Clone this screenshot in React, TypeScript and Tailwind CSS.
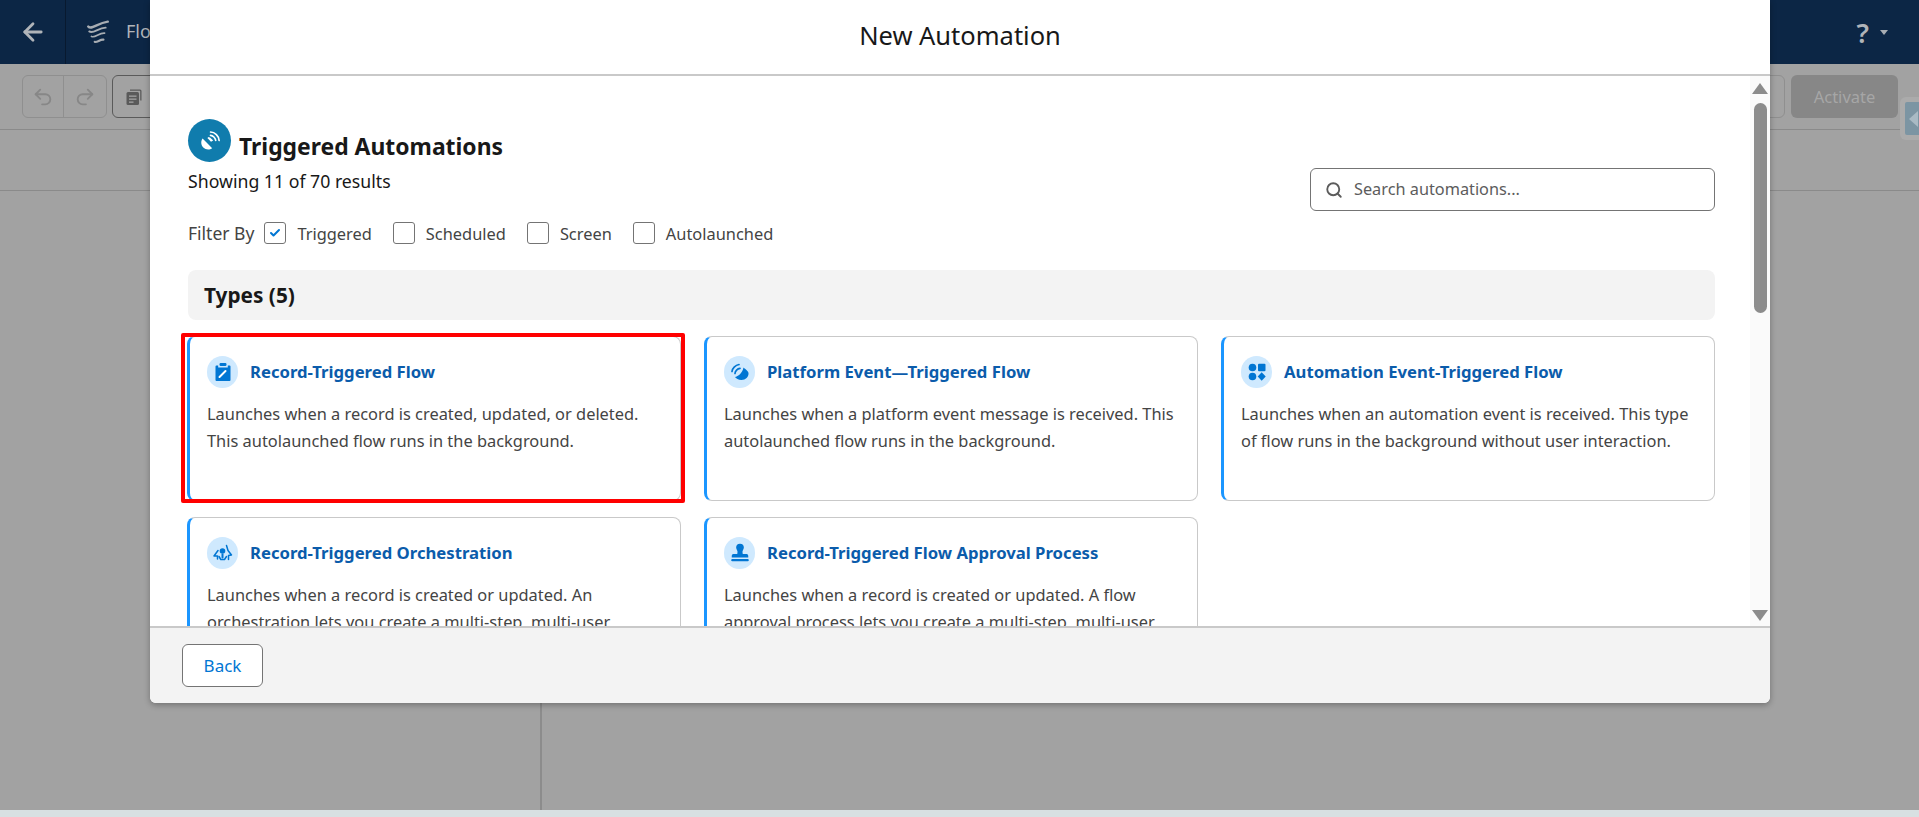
import React from "react";
import { ArrowLeft, Undo2, Redo2, Search, Check } from "lucide-react";

const Dish = ({ className = "" }: { className?: string }) => (
  <svg viewBox="0 0 24 24" className={className} fill="currentColor">
    <path d="M4.6 9.6 14.2 19.2C11.6 21.2 7.7 21 5.3 18.6 2.9 16.2 2.6 12.2 4.6 9.6Z" />
    <path d="M9.4 9.1 13 12.7 15.2 11.6 12.3 8.700 10.600 8Z" />
    <path d="M12.5 6.3C14.8 6.4 17.5 9 17.7 11.4" fill="none" stroke="currentColor" strokeWidth="1.7" strokeLinecap="round" />
    <path d="M12.6 3C16.8 3 21 7.2 21.1 11.4" fill="none" stroke="currentColor" strokeWidth="1.7" strokeLinecap="round" />
  </svg>
);

const Clipboard = () => (
  <svg viewBox="0 0 20 20" className="w-[20px] h-[20px]" fill="#0176d3">
    <rect x="6.500" y="1" width="7" height="3" rx="1.200" />
    <path d="M3.500 3.500H5.200V5.500h9.600V3.500h1.700a1 1 0 0 1 1 1v13.500a1 1 0 0 1-1 1h-13a1 1 0 0 1-1-1V4.500a1 1 0 0 1 1-1Z" />
    <path d="M6.500 15 12.500 9" stroke="#fff" strokeWidth="2" strokeLinecap="round" />
  </svg>
);

const PlatformIcon = () => (
  <svg viewBox="0 0 20 20" className="w-[20px] h-[20px]" fill="#0176d3">
    <path d="M13.500 5.500C14.500 6.500 18 8.500 18.500 11 18.800 15 15.500 18 11.500 18 8.500 18 5.800 16.500 5 15 8 14.500 12.500 11 13.500 5.500Z" />
    <path d="M2 9.500C2 6.500 5.500 3 9 2.500" fill="none" stroke="#0176d3" strokeWidth="1.700" strokeLinecap="round" />
    <path d="M5 11.500C5 9 7.500 6.500 10 6.300" fill="none" stroke="#0176d3" strokeWidth="1.700" strokeLinecap="round" />
  </svg>
);

const ShapesIcon = () => (
  <svg viewBox="0 0 20 20" className="w-[20px] h-[20px]" fill="#0176d3">
    <circle cx="5.500" cy="5.500" r="3.800" />
    <rect x="11" y="1.700" width="7.500" height="7.500" rx="1" />
    <circle cx="5.500" cy="14.500" r="3.800" />
    <path d="M14.700 10.200 18.700 14.500 14.700 18.800 10.700 14.500Z" />
  </svg>
);

const OrchestrationIcon = () => (
  <svg viewBox="0 0 20 20" className="w-[20px] h-[20px]" fill="none" stroke="#0176d3" strokeWidth="1.500" strokeLinecap="round" strokeLinejoin="round">
    <circle cx="9.500" cy="8" r="2.800" fill="#0176d3" stroke="none" />
    <path d="M9.500 11.500V14.500" strokeWidth="2" />
    <path d="M5 7.500 1 13h3.500v3" />
    <path d="M6 13.500 7.800 16.500H11.500L13.500 13.500" />
    <path d="M13.500 2.500 15 7.500 18.500 12 15.500 12.500 15.500 16.500" />
  </svg>
);

const StampIcon = () => (
  <svg viewBox="0 0 20 20" className="w-[22px] h-[22px]" fill="#0176d3">
    <path d="M10 1.500a3.500 3.500 0 0 1 3.500 3.500c0 1.500-1 2.300-1.200 3.500-.1.800 0 1.500.2 2.500h3.500a1.500 1.500 0 0 1 1.500 1.500V14H2.500v-1.500A1.500 1.500 0 0 1 4 11h3.500c.2-1 .3-1.700.2-2.500C7.500 7.300 6.500 6.500 6.500 5A3.500 3.500 0 0 1 10 1.500Z" />
    <rect x="2" y="15.500" width="16" height="2" rx="1" />
  </svg>
);

const FlowLogo = () => (
  <svg viewBox="0 0 22 22" className="w-[24px] h-[24px]" fill="none" stroke="#a8adb3" strokeLinecap="round">
    <path d="M2 6C5 9.500 10 3 20 1.500" strokeWidth="2.200" />
    <path d="M3 10.500C7 13 11 7 18 7" strokeWidth="1.800" />
    <path d="M5 15C8 17 12 11.500 17 12" strokeWidth="1.600" />
    <path d="M8 20C10 21 13 17.500 16 18" strokeWidth="2" />
  </svg>
);

const CopyIcon = () => (
  <svg viewBox="0 0 18 18" className="w-[18px] h-[18px]" fill="#5a5a5a">
    <path d="M5 1.500h10a1.500 1.500 0 0 1 1.500 1.500v9.500h-1.300V3a.3.300 0 0 0-.3-.300H5Z" />
    <rect x="1.500" y="4" width="12.500" height="13" rx="1.500" />
    <rect x="4" y="7.500" width="7.500" height="1.300" fill="#a2a2a2" />
    <rect x="4" y="10.500" width="7.500" height="1.300" fill="#a2a2a2" />
    <rect x="4" y="13.500" width="4.500" height="1.300" fill="#a2a2a2" />
  </svg>
);

function Card({ icon, title, desc }: { icon: React.ReactNode; title: string; desc: React.ReactNode }) {
  return (
    <div className="h-[165px] rounded-[8px] border border-[#c9c9c9] border-l-[3px] border-l-[#1b96ff] pl-[17px] pr-[13px] pt-[19px]">
      <div className="flex items-center gap-[12px] h-[32px]">
        <span className="w-[31px] h-[32px] rounded-full bg-[#cfe9fe] flex items-center justify-center shrink-0">{icon}</span>
        <span className="text-[16.7px] font-bold text-[#0b5cab] leading-[32px] whitespace-nowrap">{title}</span>
      </div>
      <p className="mt-[12px] text-[16.4px] leading-[27px] text-[#444444]">{desc}</p>
    </div>
  );
}

function Filter({ label, checked }: { label: string; checked?: boolean }) {
  return (
    <div className="flex items-center gap-[11px]">
      <span className="w-[22px] h-[22px] rounded-[3px] border border-[#747474] bg-white flex items-center justify-center">
        {checked && <Check className="w-[12px] h-[12px] text-[#0176d3]" strokeWidth={4} />}
      </span>
      <span className="text-[16.4px] text-[#444444] leading-[22px] pt-[2px]">{label}</span>
    </div>
  );
}

export default function App() {
  return (
    <div className="relative h-[817px] w-[1919px] overflow-hidden bg-[#a2a2a2] font-['Noto_Sans','Open_Sans',sans-serif]">
      {/* Backdrop page */}
      <div className="flex flex-col h-full">
        <div className="h-[64px] bg-[#0c2645] flex items-center text-[#b0b4b9] shrink-0">
          <div className="w-[66px] h-full flex items-center justify-center border-r border-[#08192f]">
            <ArrowLeft className="w-[28px] h-[28px]" strokeWidth={2.4} />
          </div>
          <div className="ml-[20px]"><FlowLogo /></div>
          <span className="ml-[16px] text-[18px] pb-[2px]">Flow</span>
          <span className="ml-auto text-[27px] font-semibold leading-none">?</span>
          <span className="ml-[11px] mr-[31px] w-0 h-0 border-x-[4px] border-x-transparent border-t-[5px] border-t-[#a8adb3]"></span>
        </div>
        <div className="h-[66px] border-b border-[#8a8a8a] flex items-center pl-[22px] pr-[21px] shrink-0">
          <div className="flex h-[43px] w-[85px] rounded-[6px] border border-[#8f8f8f] text-[#878787]">
            <span className="w-[41px] flex items-center justify-center border-r border-[#8f8f8f]"><Undo2 className="w-[22px] h-[22px]" /></span>
            <span className="flex-1 flex items-center justify-center"><Redo2 className="w-[22px] h-[22px]" /></span>
          </div>
          <div className="ml-[5px] h-[43px] w-[60px] rounded-[6px] border border-[#5a5a5a] flex items-center pl-[12px]"><CopyIcon /></div>
          <div className="ml-auto h-[43px] w-[60px] rounded-[6px] border border-[#8f8f8f]"></div>
          <div className="ml-[6px] h-[43px] w-[107px] rounded-[6px] bg-[#878787] text-[#a6a6a6] text-[16.5px] pt-[1px] flex items-center justify-center">Activate</div>
        </div>
        <div className="h-[61px] border-b border-[#8a8a8a] shrink-0"></div>
        <div className="flex-1 flex">
          <div className="w-[542px] border-r-2 border-[#8c8c8c]"></div>
        </div>
        <div className="h-[7px] bg-[#d8e0e2] shrink-0"></div>
      </div>

      <div className="absolute right-0 top-[97px] w-[19px] h-[43px] rounded-l-[6px] bg-[#ababab] pl-[5px] py-[5px]">
        <div className="w-full h-full bg-[#7c95a3] rounded-l-[2px] flex items-center">
          <span className="w-0 h-0 border-y-[8px] border-y-transparent border-r-[9px] border-r-[#a9bac4] ml-[4px]"></span>
        </div>
      </div>

      {/* Modal */}
      <div className="absolute left-[150px] top-0 w-[1620px] h-[703px] bg-white rounded-b-[6px] shadow-[0_2px_6px_rgba(0,0,0,0.3)] flex flex-col overflow-hidden">
        <div className="h-[76px] shrink-0 border-b-2 border-[#c9c9c9] flex items-center justify-center pb-[4px]">
          <h1 className="text-[25.5px] text-[#181818] font-normal">New Automation</h1>
        </div>

        <div className="flex-1 flex min-h-0">
          <div className="flex-1 min-w-0 overflow-hidden pl-[38px] pr-[35px]">
            <div className="flex justify-between">
              <div>
                <div className="flex items-end gap-[8px] pt-[43px]">
                  <span className="w-[43px] h-[43px] rounded-full bg-[#107cad] text-white flex items-center justify-center">
                    <Dish className="w-[24px] h-[24px]" />
                  </span>
                  <h2 className="text-[22.9px] font-bold text-[#181818] leading-[30px]">Triggered Automations</h2>
                </div>
                <p className="mt-[8px] text-[17.7px] leading-[22px] text-[#181818]">Showing 11 of 70 results</p>
                <div className="mt-[30px] flex items-center h-[22px]">
                  <span className="text-[17.5px] text-[#444444] mr-[10px]">Filter By</span>
                  <Filter label="Triggered" checked />
                  <div className="w-[21px]" />
                  <Filter label="Scheduled" />
                  <div className="w-[21px]" />
                  <Filter label="Screen" />
                  <div className="w-[21px]" />
                  <Filter label="Autolaunched" />
                </div>
              </div>
              <div className="mt-[92px] w-[405px] h-[43px] rounded-[6px] border border-[#747474] flex items-center pl-[14px] gap-[11px]">
                <Search className="w-[18px] h-[18px] text-[#5c5c5c]" strokeWidth={2.5} />
                <span className="text-[16.3px] text-[#5c5c5c]">Search automations...</span>
              </div>
            </div>

            <div className="mt-[26px] h-[50px] rounded-[8px] bg-[#f3f3f3] flex items-center pl-[16px] pt-[1px]">
              <span className="text-[20.8px] font-bold text-[#181818]">Types (5)</span>
            </div>

            <div className="mt-[16px] ml-[-1px] grid grid-cols-3 gap-x-[23px] gap-y-[16px]">
              <Card icon={<Clipboard />} title="Record-Triggered Flow" desc="Launches when a record is created, updated, or deleted. This autolaunched flow runs in the background." />
              <Card icon={<PlatformIcon />} title="Platform Event—Triggered Flow" desc="Launches when a platform event message is received. This autolaunched flow runs in the background." />
              <Card icon={<ShapesIcon />} title="Automation Event-Triggered Flow" desc="Launches when an automation event is received. This type of flow runs in the background without user interaction." />
              <Card icon={<OrchestrationIcon />} title="Record-Triggered Orchestration" desc="Launches when a record is created or updated. An orchestration lets you create a multi-step, multi-user process." />
              <Card icon={<StampIcon />} title="Record-Triggered Flow Approval Process" desc="Launches when a record is created or updated. A flow approval process lets you create a multi-step, multi-user process." />
            </div>
          </div>

          <div className="w-[20px] shrink-0 bg-[#fafafa] flex flex-col items-center pt-[7px]">
            <span className="w-0 h-0 border-x-[8px] border-x-transparent border-b-[11px] border-b-[#8c8c8c]"></span>
            <span className="mt-[9px] w-[13px] h-[210px] rounded-full bg-[#8c8c8c]"></span>
            <span className="mt-auto mb-[5px] w-0 h-0 border-x-[8px] border-x-transparent border-t-[11px] border-t-[#8c8c8c]"></span>
          </div>
        </div>

        <div className="h-[77px] shrink-0 border-t-2 border-[#c9c9c9] bg-[#f3f3f3] flex items-center pl-[32px]">
          <button className="w-[81px] h-[43px] rounded-[6px] border border-[#747474] bg-white text-[17px] text-[#0176d3]">Back</button>
        </div>
      </div>

      {/* Red annotation */}
      <div className="absolute left-[181px] top-[333px] w-[504px] h-[170px] border-[4px] border-[#ff0000] rounded-[2px] pointer-events-none"></div>
    </div>
  );
}
